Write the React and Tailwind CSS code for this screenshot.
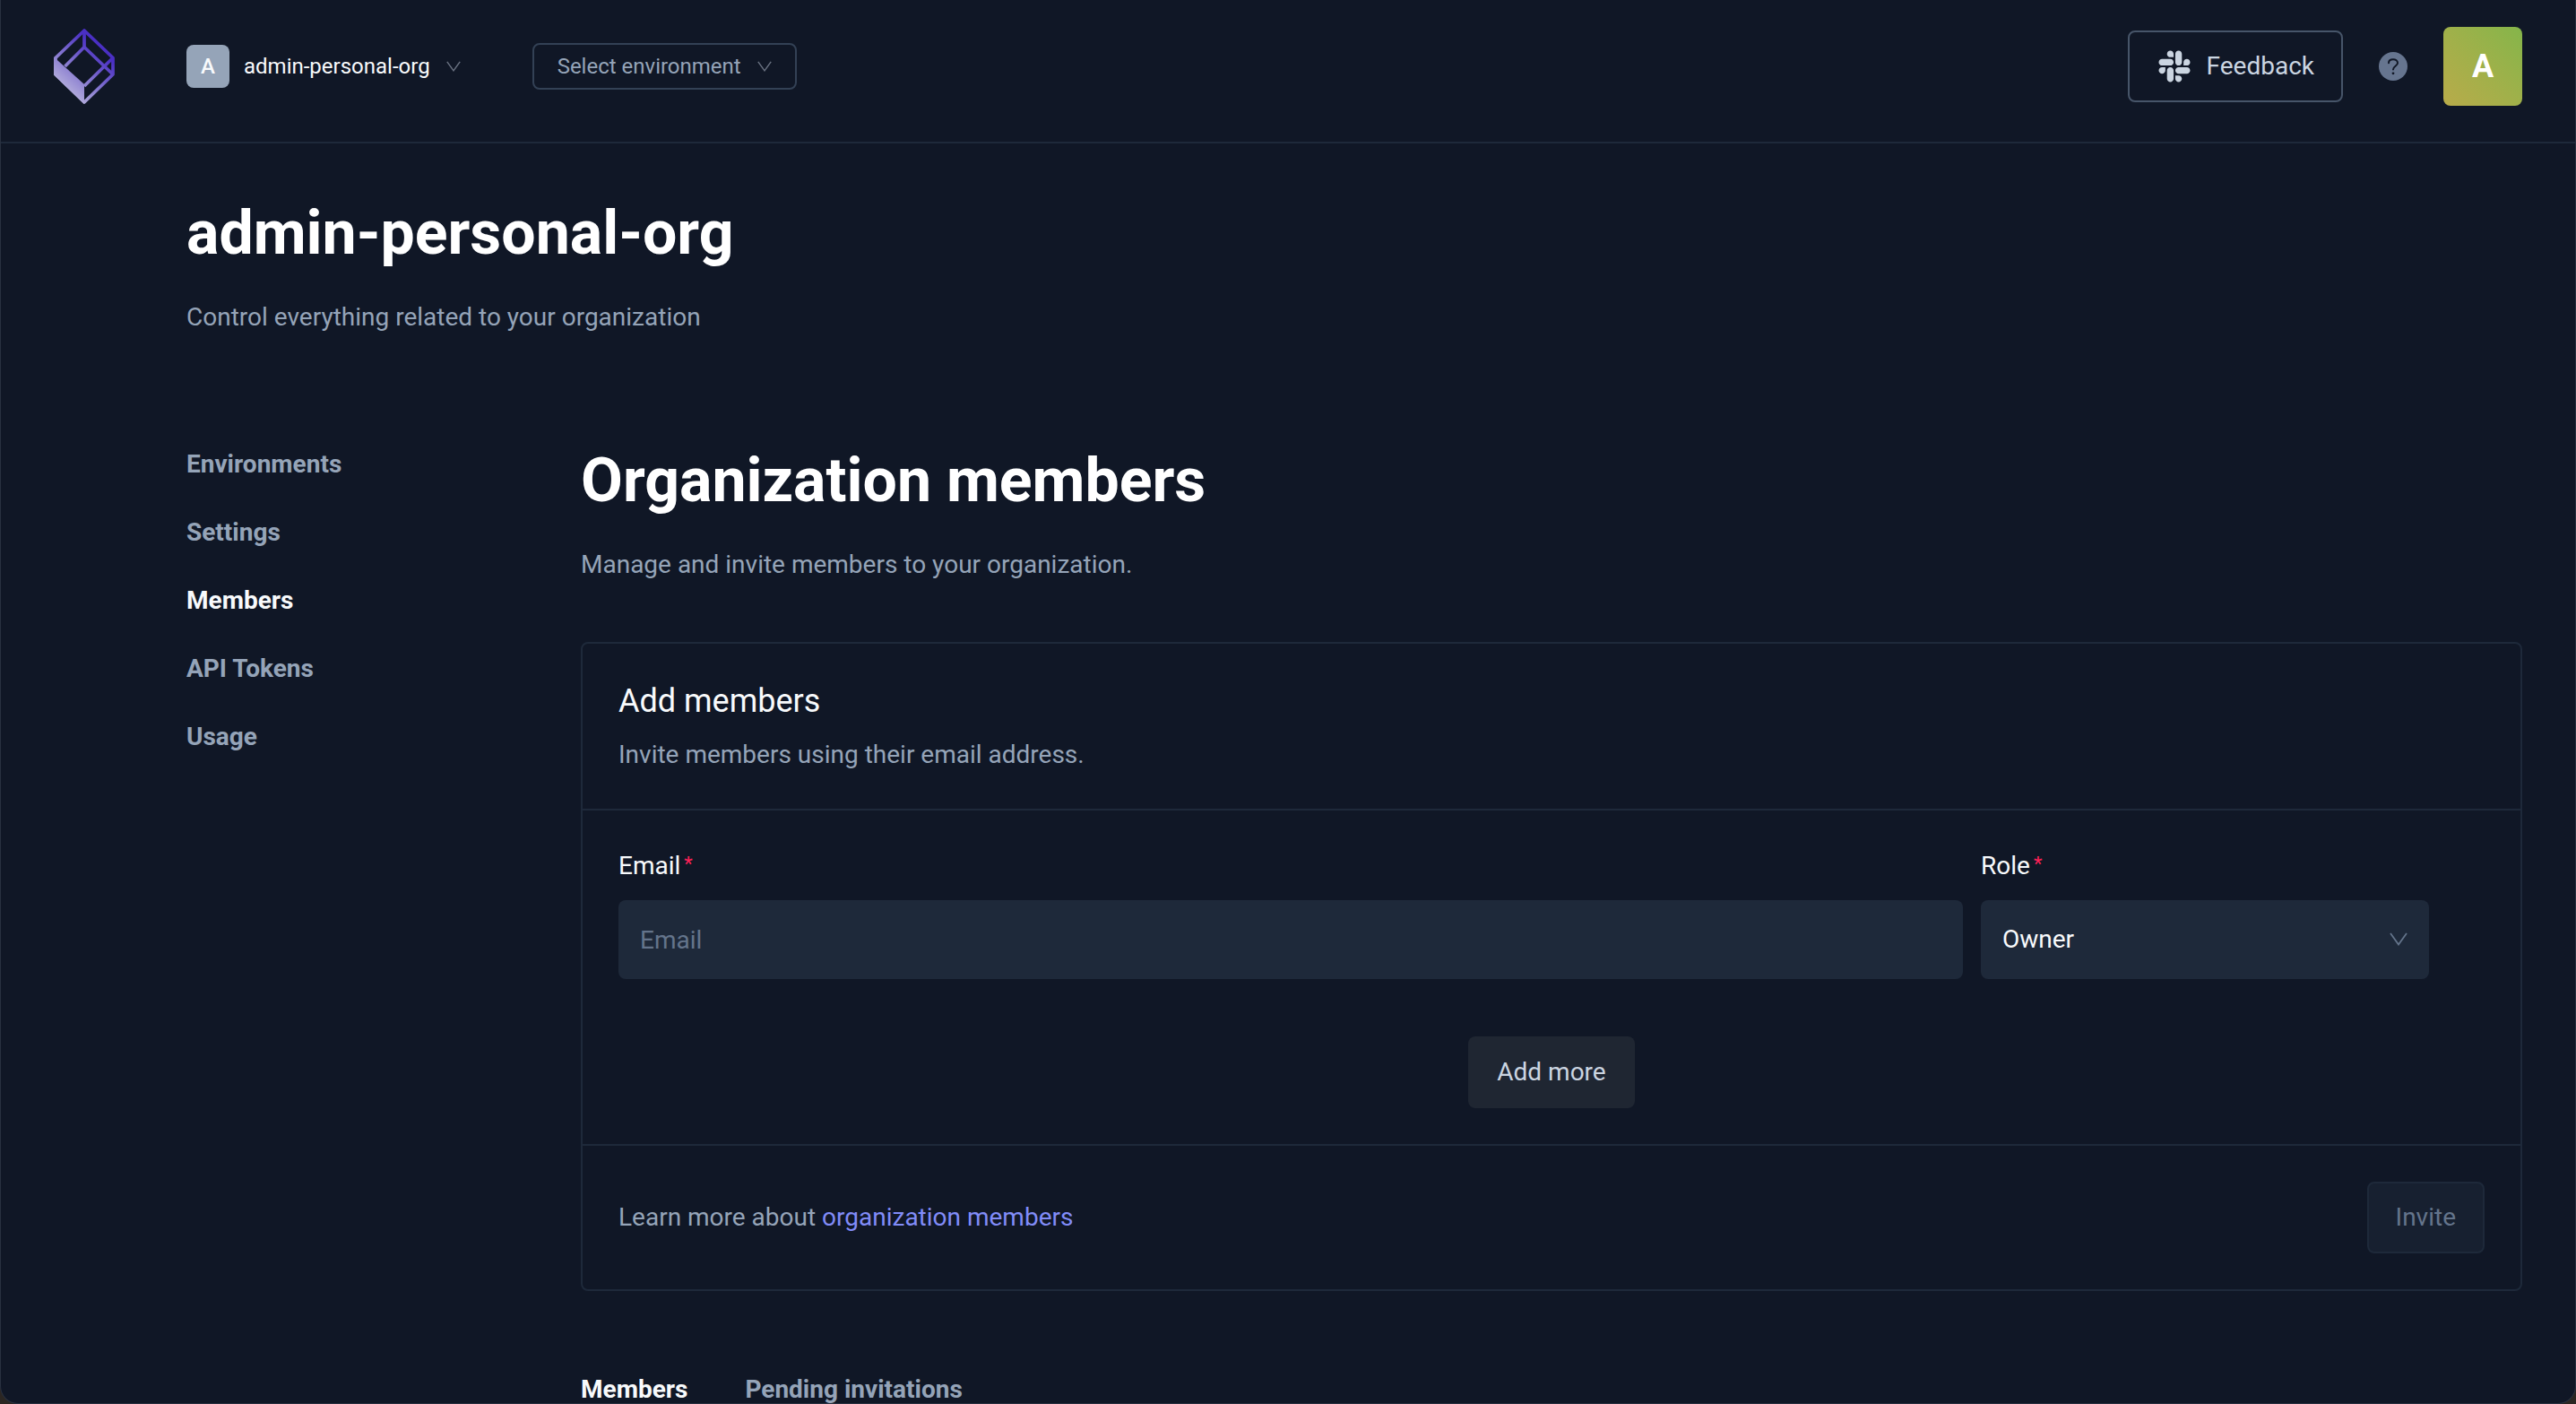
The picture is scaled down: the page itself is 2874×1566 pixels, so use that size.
import { FaSlack } from "react-icons/fa";

const navItems = ["Environments", "Settings", "Members", "API Tokens", "Usage"];

function Logo() {
  return (
    <svg viewBox="0 0 68 84" className="h-[84px] w-[68px]" fill="none" aria-hidden="true">
      <defs>
        <linearGradient id="cube" x1="12" y1="68" x2="52" y2="24" gradientUnits="userSpaceOnUse">
          <stop offset="0" stopColor="#b4aedc" />
          <stop offset="0.4" stopColor="#887bd0" />
          <stop offset="1" stopColor="#4a2fc4" />
        </linearGradient>
      </defs>
      <g stroke="url(#cube)" strokeWidth="3.7" strokeLinejoin="round">
        <path d="M34 2 66 32.500v18.500L34 82 2 51V32.500z" />
        <path d="M34.01 2V20.500M66 32.500 34 64 M66 51 34 20.500 12.500 42" />
      </g>
      <path d="M0 31.500 34 62v22L0 51.500z" fill="url(#cube)" />
    </svg>
  );
}

function HelpIcon() {
  return (
    <svg viewBox="0 0 32 32" className="size-8" fill="none" aria-hidden="true">
      <circle cx="16" cy="16" r="16" fill="#66758f" />
      <path
        d="M11 12.200C11 9.700 13.200 8.200 16 8.200s5 1.700 5 4.100c0 3.400-5 3.600-5 7.200"
        stroke="#101726"
        strokeWidth="2"
        strokeLinecap="round"
      />
      <circle cx="16" cy="23.800" r="1.400" fill="#101726" />
    </svg>
  );
}

function Chevron({ className }) {
  return (
    <svg viewBox="0 0 20 15" className={className} fill="none" stroke="currentColor" aria-hidden="true">
      <path d="M1 1 10 13.500 19 1" strokeWidth="1.8" />
    </svg>
  );
}

function Header() {
  return (
    <header className="flex h-40 items-center border-b-2 border-[#1e293a] pr-[59px] pb-2.5 pl-[59px]">
      <a href="#home" aria-label="Home">
        <Logo />
      </a>
      <button type="button" className="ml-20 flex items-center text-2xl leading-7 text-slate-50">
        <span className="mr-4 flex size-12 items-center justify-center rounded-lg bg-[#95a4b8] font-medium">A</span>
        admin-personal-org
        <Chevron className="ml-[18px] h-3 w-4 text-gray-500" />
      </button>
      <button
        type="button"
        className="ml-20 flex h-[52px] items-center rounded-lg border-2 border-[#334155] px-[26px] text-2xl leading-7 text-[#95a4b8]"
      >
        Select environment
        <Chevron className="ml-[18px] h-3 w-4 text-gray-500" />
      </button>
      <div className="ml-auto flex items-center">
        <button
          type="button"
          className="flex h-20 items-center rounded-lg border-2 border-[#475569] px-[30px] text-[#cbd5e1]"
        >
          <FaSlack className="mr-4 size-10" />
          Feedback
        </button>
        <button type="button" aria-label="Help" className="ml-10">
          <HelpIcon />
        </button>
        <button
          type="button"
          aria-label="Account"
          className="ml-10 flex size-[88px] items-center justify-center rounded-lg bg-linear-to-tr from-[#b8ab4a] to-[#84b54a] text-4xl font-bold text-white"
        >
          A
        </button>
      </div>
    </header>
  );
}

function FieldLabel({ htmlFor, children }) {
  return (
    <label htmlFor={htmlFor} className="mb-4 flex gap-1 leading-[44px] text-slate-50">
      {children}
      <span className="text-[22px] leading-10 text-rose-500">*</span>
    </label>
  );
}

function AddMembers() {
  return (
    <form className="rounded-lg border-2 border-[#1e293a]">
      <div className="border-b-2 border-[#1e293a] p-10">
        <h2 className="text-4xl leading-[48px] text-slate-50">Add members</h2>
        <p className="mt-4 leading-10 text-[#95a4b8]">Invite members using their email address.</p>
      </div>
      <div className="border-b-2 border-[#1e293a] p-10">
        <div className="grid grid-cols-[3fr_1fr] gap-5 pr-[62px]">
          <div>
            <FieldLabel htmlFor="email">Email</FieldLabel>
            <input
              id="email"
              type="email"
              placeholder="Email"
              className="block h-[88px] w-full rounded-lg bg-[#1e293a] px-6 text-slate-50 outline-none placeholder:text-[#64748b]"
            />
          </div>
          <div>
            <FieldLabel htmlFor="role">Role</FieldLabel>
            <div className="relative">
              <select
                id="role"
                defaultValue="Owner"
                className="block h-[88px] w-full appearance-none rounded-lg bg-[#1e293a] px-6 text-slate-50 outline-none"
              >
                <option>Owner</option>
              </select>
              <Chevron className="pointer-events-none absolute top-9 right-6 h-[15px] w-5 text-[#64748b]" />
            </div>
          </div>
        </div>
        <div className="mt-16 flex justify-center">
          <button type="button" className="h-20 rounded-lg bg-[#1f2632] px-8 text-[#cbd5e1]">
            Add more
          </button>
        </div>
      </div>
      <div className="flex items-center justify-between p-10">
        <p className="text-[#95a4b8]">
          Learn more about{" "}
          <a href="#docs" className="text-[#818cf8]">
            organization members
          </a>
        </p>
        <button
          type="submit"
          disabled
          className="h-20 rounded-lg border-2 border-[#1e293a] bg-[#172030] px-[30px] text-[#64748b]"
        >
          Invite
        </button>
      </div>
    </form>
  );
}

export default function App() {
  return (
    <div className="h-screen bg-[#2b2622]">
      <div className="h-full overflow-hidden rounded-b-[20px] border-x border-b border-[#293140] bg-[#101726] font-['Roboto',sans-serif] text-[28px] leading-8">
        <Header />
        <main className="pt-[58px] pr-[59px] pl-[207px]">
          <h1 className="text-[68px] leading-[84px] font-bold text-white">admin-personal-org</h1>
          <p className="mt-9 text-[#95a4b8]">Control everything related to your organization</p>
          <div className="mt-[124px] flex">
            <nav className="flex w-[440px] shrink-0 flex-col items-start gap-11 pt-2 font-bold text-[#95a4b8]">
              {navItems.map((item) => (
                <a key={item} href="#nav" className={item === "Members" ? "text-slate-50" : ""}>
                  {item}
                </a>
              ))}
            </nav>
            <section className="min-w-0 flex-1">
              <h1 className="text-[68px] leading-[84px] font-bold text-white">Organization members</h1>
              <p className="mt-9 mb-[70px] text-[#95a4b8]">Manage and invite members to your organization.</p>
              <AddMembers />
              <div role="tablist" className="mt-[94px] flex gap-16 font-bold">
                <button type="button" role="tab" aria-selected="true" className="text-slate-50">
                  Members
                </button>
                <button type="button" role="tab" aria-selected="false" className="text-[#95a4b8]">
                  Pending invitations
                </button>
              </div>
            </section>
          </div>
        </main>
      </div>
    </div>
  );
}
